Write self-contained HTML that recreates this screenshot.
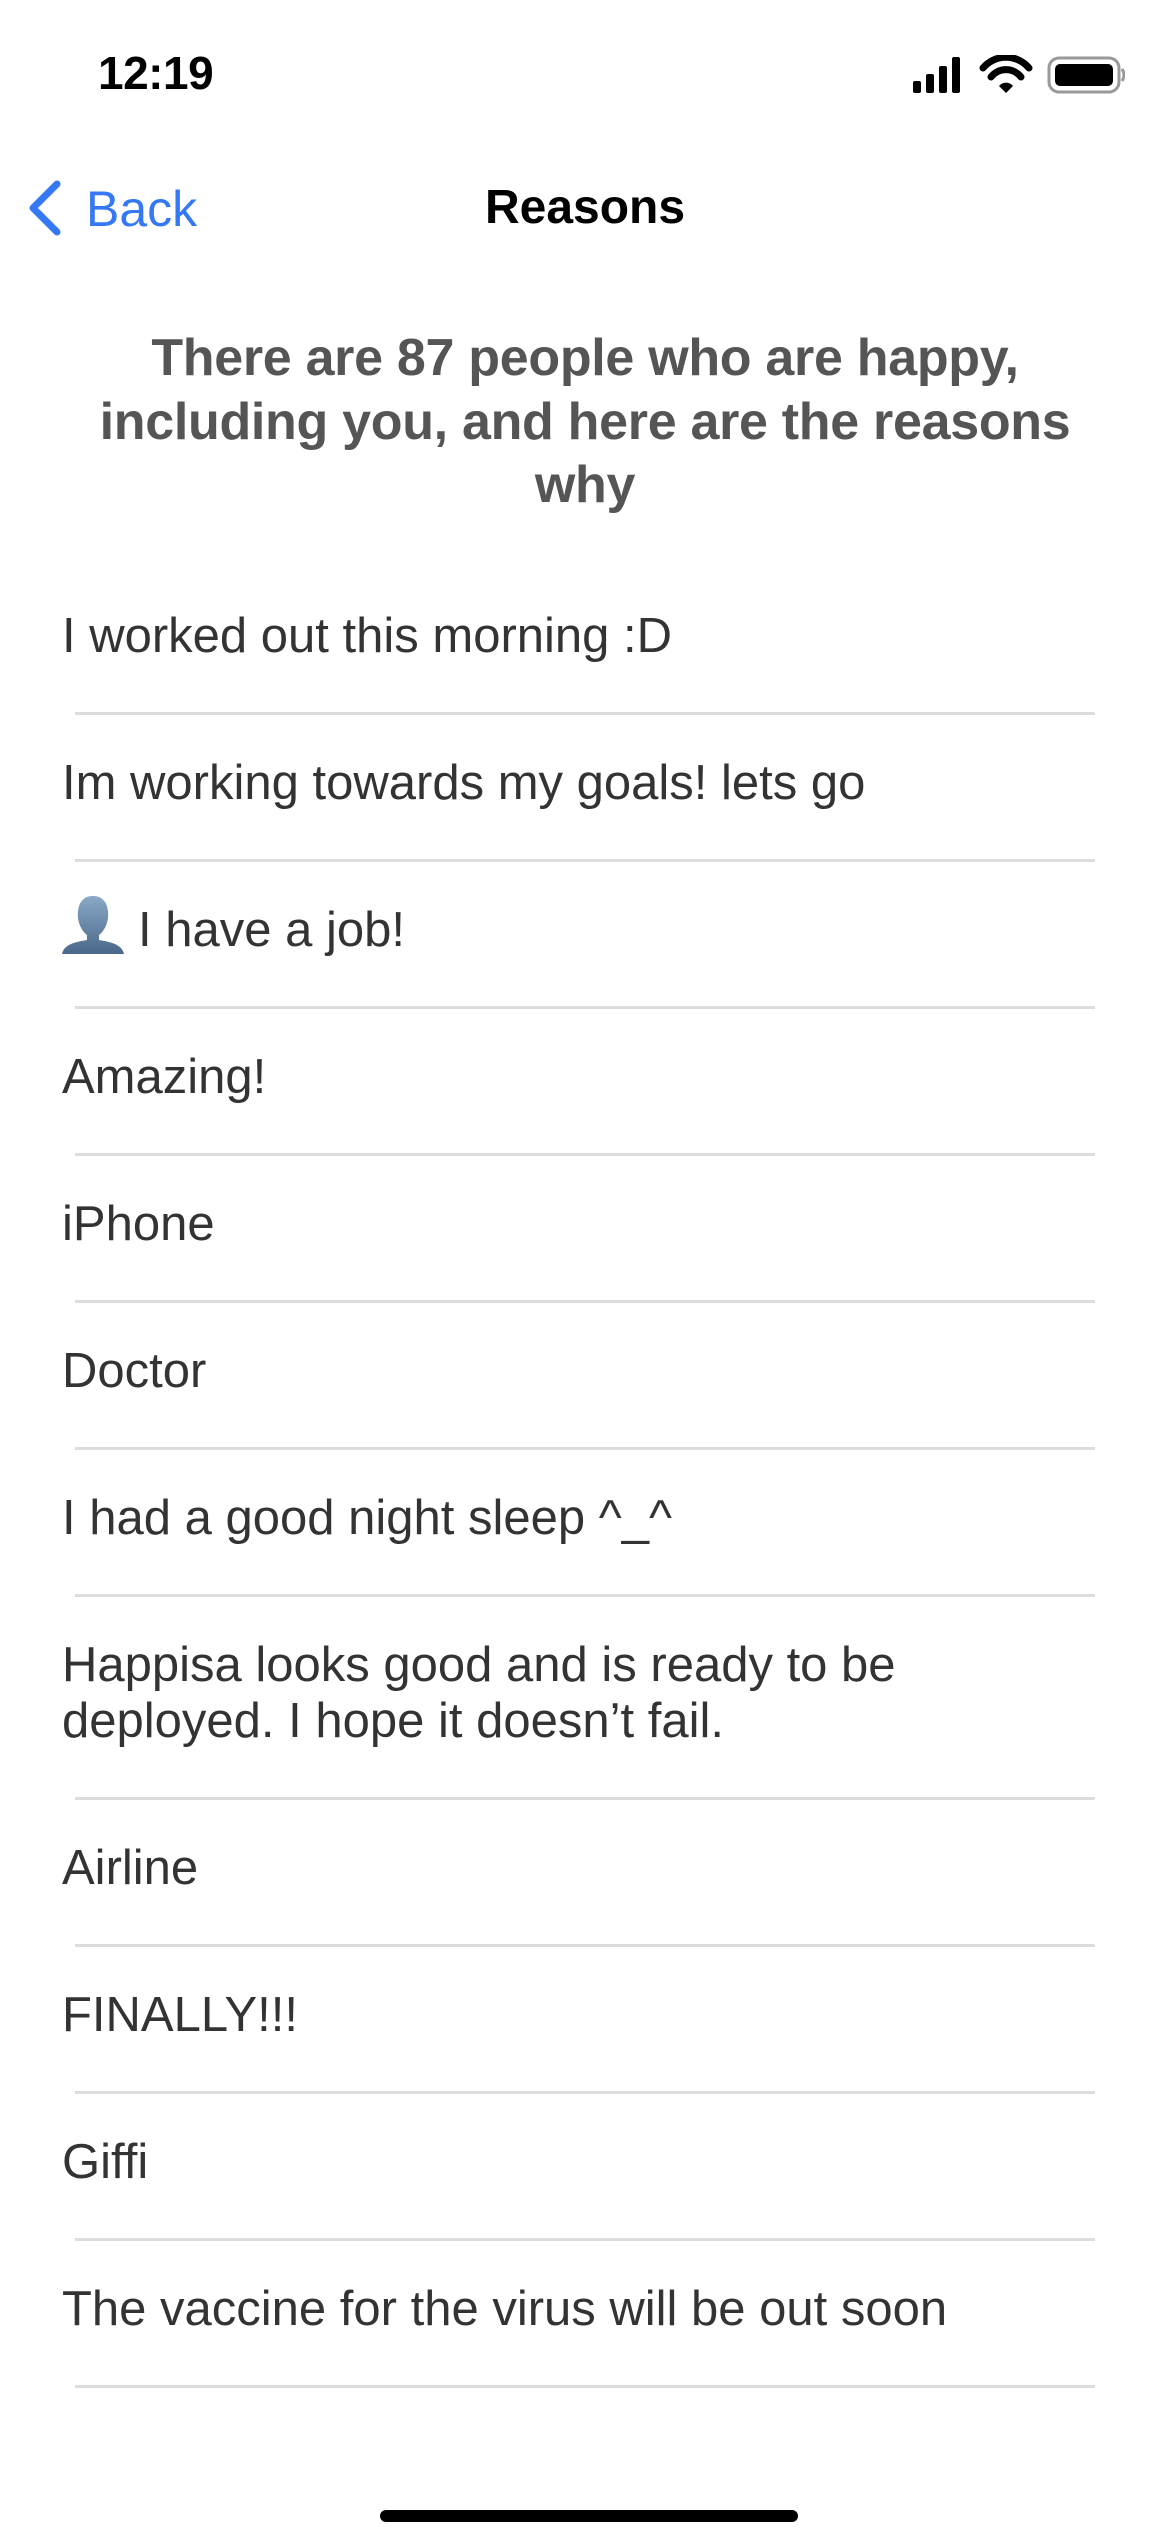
<!DOCTYPE html>
<html><head><meta charset="utf-8"><style>
*{margin:0;padding:0;box-sizing:border-box}
body{width:1170px;height:2532px;background:#fff;font-family:"Liberation Sans",sans-serif;position:relative;overflow:hidden}
.time{position:absolute;left:98px;top:46px;font-size:46px;font-weight:bold;color:#000;letter-spacing:-0.5px}
.back{position:absolute;left:86px;top:180px;font-size:50px;color:#3478f6}
.title{position:absolute;left:0;width:1170px;text-align:center;top:180px;font-size:48px;font-weight:bold;color:#000}
.hdr{position:absolute;top:327px;left:0;width:1170px;text-align:center;font-size:52px;line-height:63.5px;font-weight:bold;color:#555;white-space:nowrap;letter-spacing:-0.3px}
.list{position:absolute;top:568px;left:0;width:1170px}
.row{padding:40px 0 48px 62px;position:relative;font-size:49px;line-height:56px;height:147px;color:#333;white-space:nowrap}
.row.two{height:203px}
.row:after{content:"";position:absolute;left:75px;right:75px;bottom:0;height:3px;background:#dcdcdc}
.home{position:absolute;left:380px;top:2510px;width:418px;height:12px;border-radius:6px;background:#000}
</style></head><body>
<div class="time">12:19</div>
<svg style="position:absolute;left:910px;top:55px" width="215" height="40" viewBox="0 0 215 40">
<rect x="3" y="26" width="8" height="12" rx="2" fill="#000"/>
<rect x="16" y="19" width="8" height="19" rx="2" fill="#000"/>
<rect x="29" y="11" width="8" height="27" rx="2" fill="#000"/>
<rect x="42" y="2" width="8" height="36" rx="2" fill="#000"/>
<path d="M73 13 A30 30 0 0 1 119 13" stroke="#000" stroke-width="7" fill="none" stroke-linecap="round"/>
<path d="M81 22 A19 19 0 0 1 111 22" stroke="#000" stroke-width="7" fill="none" stroke-linecap="round"/>
<path d="M89 31 L96 38 L103 31 A9 9 0 0 0 89 31Z" fill="#000"/>
<rect x="139" y="3" width="70" height="34" rx="10" fill="none" stroke="#999" stroke-width="3"/>
<rect x="145" y="9" width="58" height="22" rx="5" fill="#000"/>
<path d="M212 14 Q216 20 212 26" stroke="#999" stroke-width="3" fill="none"/>
</svg>
<svg style="position:absolute;left:26px;top:180px" width="36" height="56" viewBox="0 0 36 56"><path d="M31 4 L7 28 L31 52" stroke="#3478f6" stroke-width="7" fill="none" stroke-linecap="round" stroke-linejoin="round"/></svg>
<div class="back">Back</div>
<div class="title">Reasons</div>
<div class="hdr">There are 87 people who are happy,<br>including you, and here are the reasons<br>why</div>
<div class="list">
<div class="row">I worked out this morning :D</div>
<div class="row">Im working towards my goals! lets go</div>
<div class="row"><svg width="62" height="58" viewBox="0 0 62 58" style="vertical-align:-8px;margin-right:14px;margin-top:-10px"><defs><linearGradient id="g" x1="0" y1="0" x2="0" y2="1"><stop offset="0" stop-color="#8aa9c6"/><stop offset="1" stop-color="#4a6889"/></linearGradient></defs><path d="M31 0 C18 0 15 12 16 22 C17 30 21 36 25 39 L25 44 C14 46 2 48 0 58 L62 58 C60 48 48 46 37 44 L37 39 C41 36 45 30 46 22 C47 12 44 0 31 0Z" fill="url(#g)"/></svg>I have a job!</div>
<div class="row">Amazing!</div>
<div class="row">iPhone</div>
<div class="row">Doctor</div>
<div class="row">I had a good night sleep ^_^</div>
<div class="row two">Happisa looks good and is ready to be<br>deployed. I hope it doesn’t fail.</div>
<div class="row">Airline</div>
<div class="row">FINALLY!!!</div>
<div class="row">Giffi</div>
<div class="row">The vaccine for the virus will be out soon</div>
</div>
<div class="home"></div>
</body></html>
